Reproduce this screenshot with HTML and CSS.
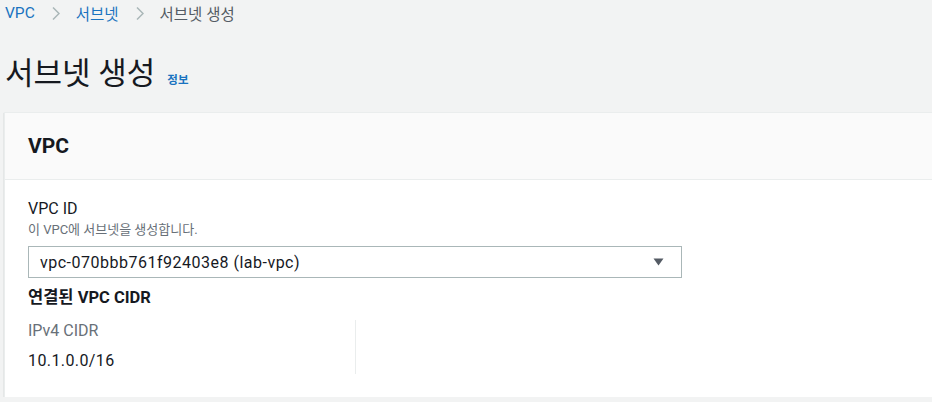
FILE: index.html
```html
<!DOCTYPE html>
<html lang="ko">
<head>
  <meta charset="UTF-8" />
  <title>서브넷 생성</title>
  <link rel="stylesheet" href="styles.css">
</head>
<body>
  <nav class="crumbs">
    <a href="#">VPC</a>
    <span class="sep">
      <svg width="8" height="13" viewBox="0 0 8 13"><path d="M1 0.5l6 6-6 6" fill="none" stroke="#aab7b8" stroke-width="1.5"/></svg>
    </span>
    <a href="#">서브넷</a>
    <span class="sep">
      <svg width="8" height="13" viewBox="0 0 8 13"><path d="M1 0.5l6 6-6 6" fill="none" stroke="#aab7b8" stroke-width="1.5"/></svg>
    </span>
    <span class="current">서브넷 생성</span>
  </nav>

  <div class="page-head">
    <h1>서브넷 생성</h1>
    <a class="info" href="#">정보</a>
  </div>

  <section class="card">
    <div class="card-head">
      <h2>VPC</h2>
    </div>
    <div class="card-body">
      <div class="label">VPC ID</div>
      <div class="desc">이 VPC에 서브넷을 생성합니다.</div>
      <div class="select">
        <span class="value">vpc-070bbb761f92403e8 (lab-vpc)</span>
        <svg width="11" height="8" viewBox="0 0 11 8"><path d="M0.5 0.5h10L5.5 7.5z" fill="#545b64"/></svg>
      </div>
      <h3>연결된 VPC CIDR</h3>
      <div class="cidr">
        <div class="cidr-col">
          <div class="key">IPv4 CIDR</div>
          <div class="val">10.1.0.0/16</div>
        </div>
      </div>
    </div>
  </section>
</body>
</html>
```

FILE: styles.css
```css
body {
  margin: 0;
  background-color: #f2f3f3;
  color: #16191f;
  font-family: Roboto, "Noto Sans CJK KR", sans-serif;
}
a {
  color: #1a73c0;
  text-decoration: none;
}
.crumbs {
  display: flex;
  align-items: center;
  height: 26px;
  padding-left: 5px;
  font-size: 15.5px;
}
.sep {
  display: flex;
  margin: 0 16px 0 17px;
}
.current {
  color: #545b64;
}
.page-head {
  display: flex;
  align-items: baseline;
  padding: 28px 0 0 5px;
}
h1 {
  margin: 0;
  font-size: 31px;
  font-weight: 400;
  line-height: 40px;
}
.info {
  margin-left: 12px;
  font-size: 11.5px;
  font-weight: 700;
}
.card {
  margin: 18px 0 0 4px;
  background: #fff;
  border-left: 1px solid #eaeded;
  border-top: 1px solid #eaeded;
  box-shadow: 0 1px 1px 0 rgba(0, 28, 36, 0.3);
  height: 285px;
  box-sizing: border-box;
}
.card-head {
  height: 67px;
  background: #fafafa;
  border-bottom: 1px solid #eaeded;
  display: flex;
  align-items: center;
  padding-left: 23px;
  box-sizing: border-box;
}
h2 {
  margin: 0;
  font-size: 21px;
  font-weight: 700;
}
.card-body {
  padding: 18px 0 0 23px;
}
.label {
  font-size: 16px;
  line-height: 22px;
}
.desc {
  font-size: 13px;
  line-height: 20px;
  color: #687078;
}
.select {
  width: 654px;
  height: 32px;
  margin-top: 6px;
  box-sizing: border-box;
  border: 1px solid #aab7b8;
  display: flex;
  align-items: center;
  justify-content: space-between;
  padding: 0 17px 0 11px;
  font-size: 16px;
}
.value {
  letter-spacing: 0.5px;
}
h3 {
  margin: 9px 0 0;
  font-size: 16.5px;
  font-weight: 700;
  line-height: 22px;
}
.cidr {
  display: flex;
  margin-top: 11px;
}
.cidr-col {
  width: 327px;
  height: 54px;
  border-right: 1px solid #eaeded;
}
.key {
  font-size: 16px;
  color: #687078;
  line-height: 22px;
}
.val {
  font-size: 16px;
  line-height: 22px;
  margin-top: 8px;
  letter-spacing: 0.4px;
}
```
